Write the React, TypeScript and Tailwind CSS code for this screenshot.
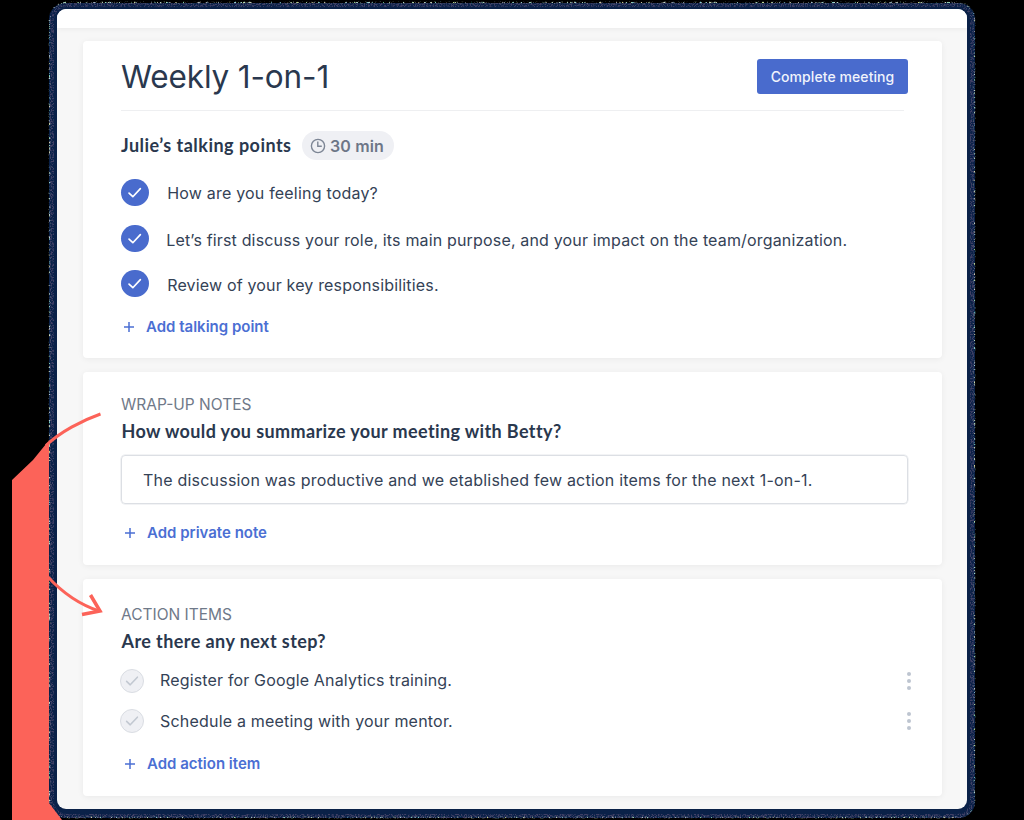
import type { ReactNode } from "react";

const Check = ({ className }: { className: string }) => (
  <svg viewBox="0 0 28 28" className={className} fill="none" stroke="currentColor" strokeWidth="1.7" strokeLinecap="round" strokeLinejoin="round">
    <path d="M8.200 14.400l3.900 3.700 7.700-8.200" />
  </svg>
);

const Clock = () => (
  <svg viewBox="0 0 16 16" className="h-4 w-4 shrink-0 text-[#7d8695]" fill="none" stroke="currentColor" strokeWidth="1.4">
    <circle cx="8" cy="8" r="6.6" />
    <path d="M7.8 3.6v4.6h4" />
  </svg>
);

const AddLink = ({ children, className }: { children: ReactNode; className: string }) => (
  <button className={`flex h-5 items-center text-[15px] leading-5 font-semibold whitespace-nowrap text-[#4b6fd3] ${className}`}>
    <svg viewBox="0 0 10 10" className="mr-3 h-[10px] w-[10px]" stroke="currentColor" strokeWidth="1.5">
      <path d="M5 0v10M0 5h10" />
    </svg>
    {children}
  </button>
);

const TalkingPoint = ({ children, className, textClass }: { children: ReactNode; className: string; textClass: string }) => (
  <li className={`flex h-7 items-center ${className}`}>
    <span className="mx-[0.4px] mb-[0.6px] h-[27.4px] w-[27.4px] shrink-0 rounded-full bg-[#496bcd] text-white">
      <Check className="h-[27.4px] w-[27.4px]" />
    </span>
    <span className={`text-base leading-6 whitespace-nowrap ${textClass}`}>{children}</span>
  </li>
);

const ActionItem = ({ children, className, textClass }: { children: ReactNode; className: string; textClass: string }) => (
  <li className={`flex h-6 items-center ${className}`}>
    <span className="flex h-6 w-6 shrink-0 items-center justify-center rounded-full border border-[#dadde3] bg-[#eff0f4] text-[#c2c8d1]">
      <Check className="h-[26px] w-[26px] shrink-0" />
    </span>
    <span className={`ml-4 text-base leading-6 whitespace-nowrap ${textClass}`}>{children}</span>
    <button aria-label="More" className="mr-[-3px] ml-auto flex flex-col items-center gap-[3.4px]">
      <i className="h-1 w-1 rounded-full bg-[#bdc5d0]" />
      <i className="h-1 w-1 rounded-full bg-[#bdc5d0]" />
      <i className="h-1 w-1 rounded-full bg-[#bdc5d0]" />
    </button>
  </li>
);

const Card = ({ children, className }: { children: ReactNode; className: string }) => (
  <section className={`rounded-[4px] bg-white pr-[34px] pl-[38px] shadow-[0_1px_6px_rgba(0,0,0,0.06)] ${className}`}>{children}</section>
);

const FrameGrain = () => (
  <svg viewBox="0 0 1024 820" className="pointer-events-none absolute inset-0 h-[820px] w-[1024px]" fill="none">
    <defs>
      <filter id="grain" x="0" y="0" width="1024" height="820" filterUnits="userSpaceOnUse">
        <feTurbulence type="fractalNoise" baseFrequency="0.7" numOctaves="2" seed="4" result="n" />
        <feColorMatrix in="n" type="matrix" values="0 0 0 0 0.05  0 0 0 0 0.05  0 0 0 0 0.13  5 0 0 0 -2.2" result="m" />
        <feComposite in="m" in2="SourceGraphic" operator="in" />
      </filter>
      <filter id="specks" x="0" y="0" width="1024" height="820" filterUnits="userSpaceOnUse">
        <feTurbulence type="fractalNoise" baseFrequency="0.55" numOctaves="2" seed="9" result="n" />
        <feColorMatrix in="n" type="matrix" values="1 0 0 0 -0.12  0 1 0 0 -0.12  0 0 1 0 -0.05  0 6 0 0 -3.2" result="m" />
        <feComposite in="m" in2="SourceGraphic" operator="in" />
      </filter>
    </defs>
    <rect x="52" y="5" width="920" height="811" rx="15" stroke="#000" strokeWidth="4" filter="url(#grain)" />
    <rect x="49.5" y="2.500" width="925" height="815" rx="17" stroke="#fff" strokeWidth="1.5" filter="url(#specks)" />
  </svg>
);

export default function App() {
  return (
    <div className="relative h-[820px] w-[1024px] overflow-hidden bg-black pt-[3px] pl-[49px] font-['Inter',sans-serif] text-[#344256]">
      <main className="relative h-[815px] w-[926px] rounded-[16px] bg-[#0a2148] pt-[6px] pr-[8px] pb-[9px] pl-[8px]">
        <div className="h-full overflow-hidden rounded-[9px] bg-[#f7f7f7]">
          <div className="h-[19px] bg-white shadow-[0_1px_5px_rgba(0,0,0,0.06)]" />
          <div className="flex flex-col gap-[14px] pt-[13px] pr-[25px] pl-[26px]">
            <Card className="h-[317px]">
              <header className="mr-1 flex h-[70px] items-start justify-between border-b border-[#eeeff1] pt-[18px]">
                <h1 className="text-[31.500px] leading-9 font-normal tracking-[-0.14px] whitespace-nowrap text-[#2a384e]">Weekly 1-on-1</h1>
                <button className="mr-[-4px] h-[35px] w-[151px] shrink-0 rounded-[3px] bg-[#496bcd] text-[14px] leading-[33px] font-medium tracking-[0.08px] whitespace-nowrap text-[#f0f3fc]">Complete meeting</button>
              </header>
              <div className="mt-5 flex h-[30px] items-center">
                <h2 className="mb-[2px] w-[181px] font-['Lato',sans-serif] text-[18px] leading-6 font-bold tracking-[0.47px] whitespace-nowrap text-[#2a384e]">Julie’s talking points</h2>
                <span className="mb-px flex h-[29px] w-[92px] items-center gap-1 rounded-full bg-[#eff0f4] pl-2 text-base leading-6 font-semibold tracking-[0.15px] whitespace-nowrap text-[#6d7687]">
                  <Clock />30 min
                </span>
              </div>
              <ul>
                <TalkingPoint className="mt-[18px]" textClass="ml-[18px] tracking-[0.2px]">How are you feeling today?</TalkingPoint>
                <TalkingPoint className="mt-[18px]" textClass="ml-[17px] pt-[2px] tracking-[0.165px]">Let’s first discuss your role, its main purpose, and your impact on the team/organization.</TalkingPoint>
                <TalkingPoint className="mt-[17px]" textClass="ml-[18px] pt-[2px] tracking-[0.17px]">Review of your key responsibilities.</TalkingPoint>
              </ul>
              <AddLink className="mt-[19px] ml-[3px]">Add talking point</AddLink>
            </Card>
            <Card className="h-[193px] pt-[23px]">
              <p className="text-[15.5px] leading-5 whitespace-nowrap text-[#6f7989]">WRAP-UP NOTES</p>
              <h2 className="mt-1 ml-[0.5px] font-['Lato',sans-serif] text-[18px] leading-6 font-bold tracking-[0.38px] whitespace-nowrap text-[#2a384e]">How would you summarize your meeting with Betty?</h2>
              <div className="mt-3 h-[49px] rounded-[4px] border-[1.5px] border-[#dcdfe4] pl-[21px] text-base leading-[49px] tracking-[0.21px] whitespace-nowrap shadow-[0_0_0_0.5px_#e6e8ec]">
                The discussion was productive and we etablished few action items for the next 1-on-1.
              </div>
              <AddLink className="mt-[19px] ml-1">Add private note</AddLink>
            </Card>
            <Card className="h-[217px] pt-[26px]">
              <p className="text-[15.5px] leading-5 whitespace-nowrap text-[#6f7989]">ACTION ITEMS</p>
              <h2 className="mt-1 ml-[0.5px] font-['Lato',sans-serif] text-[18px] leading-6 font-bold tracking-[0.42px] whitespace-nowrap text-[#2a384e]">Are there any next step?</h2>
              <ul className="-ml-px">
                <ActionItem className="mt-4" textClass="mb-[3px] tracking-[0.16px]">Register for Google Analytics training.</ActionItem>
                <ActionItem className="mt-4" textClass="tracking-[0.2px]">Schedule a meeting with your mentor.</ActionItem>
              </ul>
              <AddLink className="mt-[21px] ml-1">Add action item</AddLink>
            </Card>
          </div>
        </div>
      </main>
      <FrameGrain />
      <svg viewBox="0 0 1024 820" className="pointer-events-none absolute inset-0 h-[820px] w-[1024px]" fill="none" stroke="#fc6359" strokeWidth="3">
        <path d="M12 480L33 460L46 444L49 442V803L62 820H12Z" fill="#fc6359" stroke="none" />
        <path d="M100.500 414C82 420.500 60 432 46 445.500" />
        <path d="M48 577C60 590 78 604 99 611" />
        <path d="M90.500 595L100 611L82 614.500" strokeWidth="3.500" />
      </svg>
    </div>
  );
}
